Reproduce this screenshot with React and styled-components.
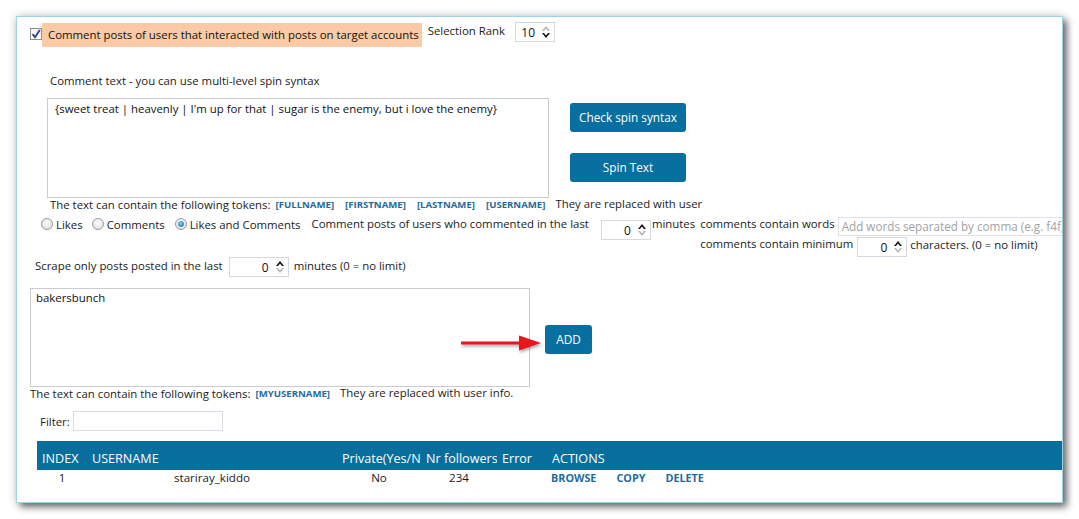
import React from "react";
import styled, { createGlobalStyle } from "styled-components";

const Global = createGlobalStyle`
  * { box-sizing: border-box; }
  html, body { margin: 0; padding: 0; background: #ffffff; }
  body {
    font-family: "Open Sans", "Noto Sans", sans-serif;
    font-size: 11.4px;
    color: #1b1b1b;
  }
`;

const Page = styled.div`
  width: 1079px;
  height: 519px;
  padding: 16px 0 0 16px;
  overflow: hidden;
`;

const Panel = styled.div`
  width: 1047px;
  height: 487px;
  background: #fff;
  border: 1px solid #9fd3e6;
  box-shadow: 4px 4px 7px rgba(0, 0, 0, 0.55), 0 0 9px rgba(0, 0, 0, 0.18);
  overflow: hidden;
  display: flex;
  flex-direction: column;
`;

const TopRow = styled.div`
  display: flex;
  align-items: flex-start;
  margin: 5px 0 0 13px;
  height: 26px;
`;

const CheckBox = styled.span`
  width: 12px;
  height: 12px;
  margin-top: 6px;
  border: 1px solid #8e8f8f;
  background: linear-gradient(#f0f0f0, #fff);
  display: flex;
  align-items: center;
  justify-content: center;
`;

const Highlight = styled.span`
  margin-top: 1px;
  height: 24px;
  line-height: 24px;
  padding: 0 3px 0 6px;
  background: #f9caa5;
  color: #111;
`;

const Plain = styled.span`
  line-height: 16px;
  margin-top: ${(p) => p.$mt || 0}px;
  margin-left: ${(p) => p.$ml || 0}px;
  white-space: nowrap;
`;

const SpinBox = styled.div`
  display: flex;
  align-items: center;
  width: ${(p) => p.$w}px;
  height: 20px;
  margin-top: ${(p) => p.$mt || 0}px;
  margin-left: ${(p) => p.$ml || 0}px;
  border: 1px solid #d4d9e1;
  background: #fff;
  flex: none;
`;

const SpinValue = styled.span`
  flex: 1;
  text-align: right;
  padding-right: 5px;
  font-size: 12px;
  color: #111;
`;

const SpinArrows = styled.div`
  width: 12px;
  display: flex;
  flex-direction: column;
  align-items: center;
  gap: 2px;
  margin-right: 2px;
`;

const SectionLabel = styled.div`
  margin: 25px 0 0 33px;
  line-height: 16px;
`;

const EditorRow = styled.div`
  display: flex;
  margin: 9px 0 0 30px;
  gap: 21px;
`;

const TextBox = styled.div`
  width: ${(p) => p.$w}px;
  height: ${(p) => p.$h}px;
  border: 1px solid #c9ccd2;
  padding: ${(p) => p.$pad};
  line-height: 16px;
  color: #111;
  background: #fff;
  flex: none;
`;

const ButtonCol = styled.div`
  display: flex;
  flex-direction: column;
  gap: 21px;
  padding-top: 5px;
`;

const BlueButton = styled.button`
  width: ${(p) => p.$w}px;
  height: 29px;
  border: none;
  border-radius: 3px;
  background: #0870a0;
  color: #fff;
  font-family: "Open Sans", sans-serif;
  font-size: 11.8px;
  padding: 0 0 2px;
  cursor: pointer;
`;

const TokenLine = styled.div`
  display: flex;
  align-items: center;
  height: 12px;
  margin: ${(p) => p.$m};
  white-space: nowrap;
`;

const Token = styled.span`
  font-weight: 700;
  font-size: 9.6px;
  color: #1f6b9c;
  margin-left: ${(p) => p.$ml || 11}px;
`;

const OptionsRow = styled.div`
  display: flex;
  align-items: flex-start;
  margin: 6px 0 0 24px;
  height: 41px;
`;

const RadioItem = styled.label`
  display: flex;
  align-items: center;
  height: 16px;
  margin-right: ${(p) => p.$mr}px;
  white-space: nowrap;
`;

const RadioCircle = styled.span`
  width: 12px;
  height: 12px;
  border-radius: 50%;
  border: 1px solid #9a9a9a;
  background: radial-gradient(circle at 50% 40%, #fbfbfb, #dcdcdc);
  margin-right: 3px;
  display: flex;
  align-items: center;
  justify-content: center;
  &::after {
    content: "";
    display: ${(p) => (p.$on ? "block" : "none")};
    width: 6px;
    height: 6px;
    border-radius: 50%;
    background: radial-gradient(circle at 40% 35%, #7cc7f2, #1b6fb0);
  }
`;

const RightCol = styled.div`
  display: flex;
  flex-direction: column;
  margin-left: 5px;
`;

const RightLine = styled.div`
  display: flex;
  align-items: flex-start;
  height: ${(p) => p.$h}px;
`;

const WordsInput = styled.div`
  width: 240px;
  height: 19px;
  margin-top: 1px;
  margin-left: 3px;
  border: 1px solid #dde1e7;
  color: #a3a3a3;
  font-size: 11.7px;
  line-height: 17px;
  padding-left: 3px;
  white-space: nowrap;
  overflow: hidden;
`;

const ScrapeRow = styled.div`
  display: flex;
  align-items: flex-start;
  margin: 0 0 0 18px;
  height: 20px;
`;

const AddRow = styled.div`
  position: relative;
  display: flex;
  align-items: flex-start;
  margin: 11px 0 0 13px;
`;

const AddButtonWrap = styled.div`
  margin: 37px 0 0 15px;
`;

const Arrow = styled.svg`
  position: absolute;
  left: 431px;
  top: 46px;
  filter: drop-shadow(1px 2px 1.5px rgba(0, 0, 0, 0.35));
`;

const FilterRow = styled.div`
  display: flex;
  align-items: center;
  margin: 12px 0 0 23px;
  height: 20px;
`;

const FilterInput = styled.div`
  width: 150px;
  height: 20px;
  margin-left: 3px;
  border: 1px solid #d9dde3;
`;

const Table = styled.div`
  margin: 10px 0 0 20px;
`;

const cols = "50px 250px 84px 76px 50px 1fr";

const HeaderRow = styled.div`
  display: grid;
  grid-template-columns: ${cols};
  height: 29px;
  background: #086e9c;
  color: #fff;
  font-size: 12.6px;
  line-height: 16px;
  padding-top: 10px;
`;

const HeadCell = styled.div`
  padding-left: 5px;
  white-space: nowrap;
  overflow: hidden;
`;

const BodyRow = styled.div`
  display: grid;
  grid-template-columns: ${cols};
  height: 16px;
  line-height: 16px;
  font-size: 11.6px;
`;

const Cell = styled.div`
  text-align: ${(p) => p.$align || "center"};
  white-space: nowrap;
`;

const Actions = styled.div`
  display: flex;
  padding-left: 4px;
`;

const ActionLink = styled.span`
  font-weight: 700;
  font-size: 10.8px;
  color: #1f6b9c;
  margin-right: ${(p) => p.$mr}px;
`;

function Spinner({ value, w, mt, ml, upOn = true }) {
  return (
    <SpinBox $w={w} $mt={mt} $ml={ml}>
      <SpinValue>{value}</SpinValue>
      <SpinArrows>
        <svg width="8" height="5" viewBox="0 0 8 5">
          <path d="M0 5 L4 0 L8 5 L6 5 L4 2.5 L2 5Z" fill={upOn ? "#111" : "#b5b5b5"} />
        </svg>
        <svg width="8" height="5" viewBox="0 0 8 5">
          <path d="M0 0 L4 5 L8 0 L6 0 L4 2.5 L2 0Z" fill={upOn ? "#b5b5b5" : "#111"} />
        </svg>
      </SpinArrows>
    </SpinBox>
  );
}

export default function App() {
  return (
    <>
      <Global />
      <Page>
        <Panel>
          <TopRow>
            <CheckBox>
              <svg width="10" height="10" viewBox="0 0 10 10">
                <path d="M1.5 5.2 L4 8.2 L8.8 1" stroke="#2a3f8f" strokeWidth="1.8" fill="none" />
              </svg>
            </CheckBox>
            <Highlight>Comment posts of users that interacted with posts on target accounts</Highlight>
            <Plain $mt={1} $ml={6}>Selection Rank</Plain>
            <Spinner value="10" w={40} ml={10} upOn={false} />
          </TopRow>

          <SectionLabel>Comment text - you can use multi-level spin syntax</SectionLabel>

          <EditorRow>
            <TextBox $w={502} $h={100} $pad="2px 7px">
              {"{sweet treat | heavenly | I'm up for that | sugar is the enemy, but i love the enemy}"}
            </TextBox>
            <ButtonCol>
              <BlueButton $w={116}>Check spin syntax</BlueButton>
              <BlueButton $w={116}>Spin Text</BlueButton>
            </ButtonCol>
          </EditorRow>

          <TokenLine $m="0 0 0 33px">
            The text can contain the following tokens:
            <Token $ml={5}>[FULLNAME]</Token>
            <Token>[FIRSTNAME]</Token>
            <Token>[LASTNAME]</Token>
            <Token>[USERNAME]</Token>
            <Plain $ml={10}>They are replaced with user</Plain>
          </TokenLine>

          <OptionsRow>
            <RadioItem $mr={9}>
              <RadioCircle />
              Likes
            </RadioItem>
            <RadioItem $mr={10}>
              <RadioCircle />
              Comments
            </RadioItem>
            <RadioItem $mr={11}>
              <RadioCircle $on />
              Likes and Comments
            </RadioItem>
            <Plain>Comment posts of users who commented in the last</Plain>
            <Spinner value="0" w={50} mt={4} ml={12} />
            <Plain $ml={1}>minutes</Plain>
            <RightCol>
              <RightLine $h={21}>
                <Plain>comments contain words</Plain>
                <WordsInput>Add words separated by comma (e.g. f4f,lb</WordsInput>
              </RightLine>
              <RightLine $h={20}>
                <Plain $mt={-1}>comments contain minimum</Plain>
                <Spinner value="0" w={50} ml={4} />
                <Plain $ml={3}>characters. (0 = no limit)</Plain>
              </RightLine>
            </RightCol>
          </OptionsRow>

          <ScrapeRow>
            <Plain $mt={1}>Scrape only posts posted in the last</Plain>
            <Spinner value="0" w={60} ml={6} />
            <Plain $mt={1} $ml={5}>minutes (0 = no limit)</Plain>
          </ScrapeRow>

          <AddRow>
            <TextBox $w={500} $h={99} $pad="1px 5px">bakersbunch</TextBox>
            <AddButtonWrap>
              <BlueButton $w={47}>ADD</BlueButton>
            </AddButtonWrap>
            <Arrow width="82" height="18" viewBox="0 0 82 18">
              <rect x="0" y="7.5" width="60" height="3" fill="#e8161c" />
              <path d="M58 1.5 L80 9 L58 16.5 Z" fill="#e8161c" />
            </Arrow>
          </AddRow>

          <TokenLine $m="0 0 0 13px">
            The text can contain the following tokens:
            <Token $ml={5}>[MYUSERNAME]</Token>
            <Plain $ml={10}>They are replaced with user info.</Plain>
          </TokenLine>

          <FilterRow>
            Filter:
            <FilterInput />
          </FilterRow>

          <Table>
            <HeaderRow>
              <HeadCell>INDEX</HeadCell>
              <HeadCell>USERNAME</HeadCell>
              <HeadCell>Private(Yes/No)</HeadCell>
              <HeadCell>Nr followers</HeadCell>
              <HeadCell>Error</HeadCell>
              <HeadCell>ACTIONS</HeadCell>
            </HeaderRow>
            <BodyRow>
              <Cell>1</Cell>
              <Cell>stariray_kiddo</Cell>
              <Cell>No</Cell>
              <Cell>234</Cell>
              <Cell />
              <Actions>
                <ActionLink $mr={20}>BROWSE</ActionLink>
                <ActionLink $mr={20}>COPY</ActionLink>
                <ActionLink $mr={0}>DELETE</ActionLink>
              </Actions>
            </BodyRow>
          </Table>
        </Panel>
      </Page>
    </>
  );
}
